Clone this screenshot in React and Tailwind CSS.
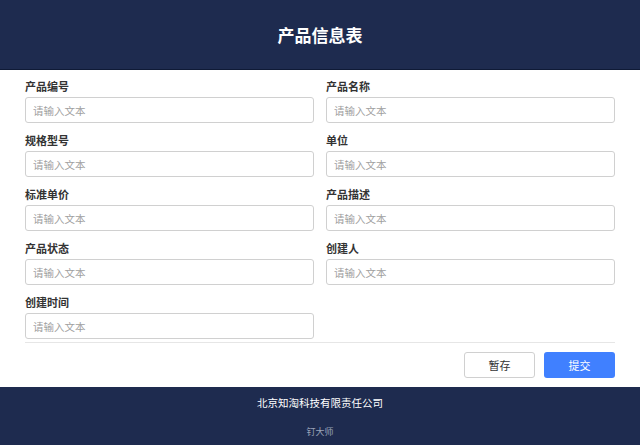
import React from 'react'

const fields = [
    ['产品编号', '产品名称'],
    ['规格型号', '单位'],
    ['标准单价', '产品描述'],
    ['产品状态', '创建人'],
    ['创建时间'],
]

const Field = ({ label }) => (
    <div className="flex flex-col">
        <label className="text-[11px] leading-[14px] font-semibold text-[#333] mb-[4px]">{label}</label>
        <input
            className="h-[26px] w-full rounded-[3px] border border-[#d0d0d0] px-[7px] text-[10.5px] text-[#333] placeholder:text-[#a0a0a0] outline-none"
            placeholder="请输入文本"
        />
    </div>
)

const App = () => {
    return (
        <div className="w-[640px] h-[445px] flex flex-col bg-white" style={{ fontFamily: '"Noto Sans CJK SC", "Noto Sans", sans-serif' }}>
            <div className="h-[70px] bg-[#1e2b4f] border-b border-[#0f1a36] flex items-center justify-center">
                <h1 className="text-[17px] font-bold text-white">产品信息表</h1>
            </div>
            <div className="px-[25px] pt-[9px] flex flex-col">
                <div className="grid grid-cols-2 gap-x-[12px] gap-y-[10px]">
                    {fields.flat().map((f) => <Field key={f} label={f} />)}
                </div>
                <div className="mt-[3px] border-t border-[#e6e6e6]"></div>
                <div className="flex justify-end gap-[9px] pt-[9px] pb-[9px]">
                    <button className="w-[71px] h-[26px] rounded-[3px] border border-[#d0d0d0] bg-white text-[11px] text-[#333]">暂存</button>
                    <button className="w-[71px] h-[26px] rounded-[3px] bg-[#4080ff] text-[11px] text-white">提交</button>
                </div>
            </div>
            <div className="flex-1 bg-[#1e2b4f] flex flex-col items-center">
                <div className="mt-[9px] text-[10.5px] leading-[14px] text-white">北京知淘科技有限责任公司</div>
                <div className="mt-[16px] text-[9px] leading-[12px] text-[#9aa3b8]">钉大师</div>
            </div>
        </div>
    )
}
export default App;
